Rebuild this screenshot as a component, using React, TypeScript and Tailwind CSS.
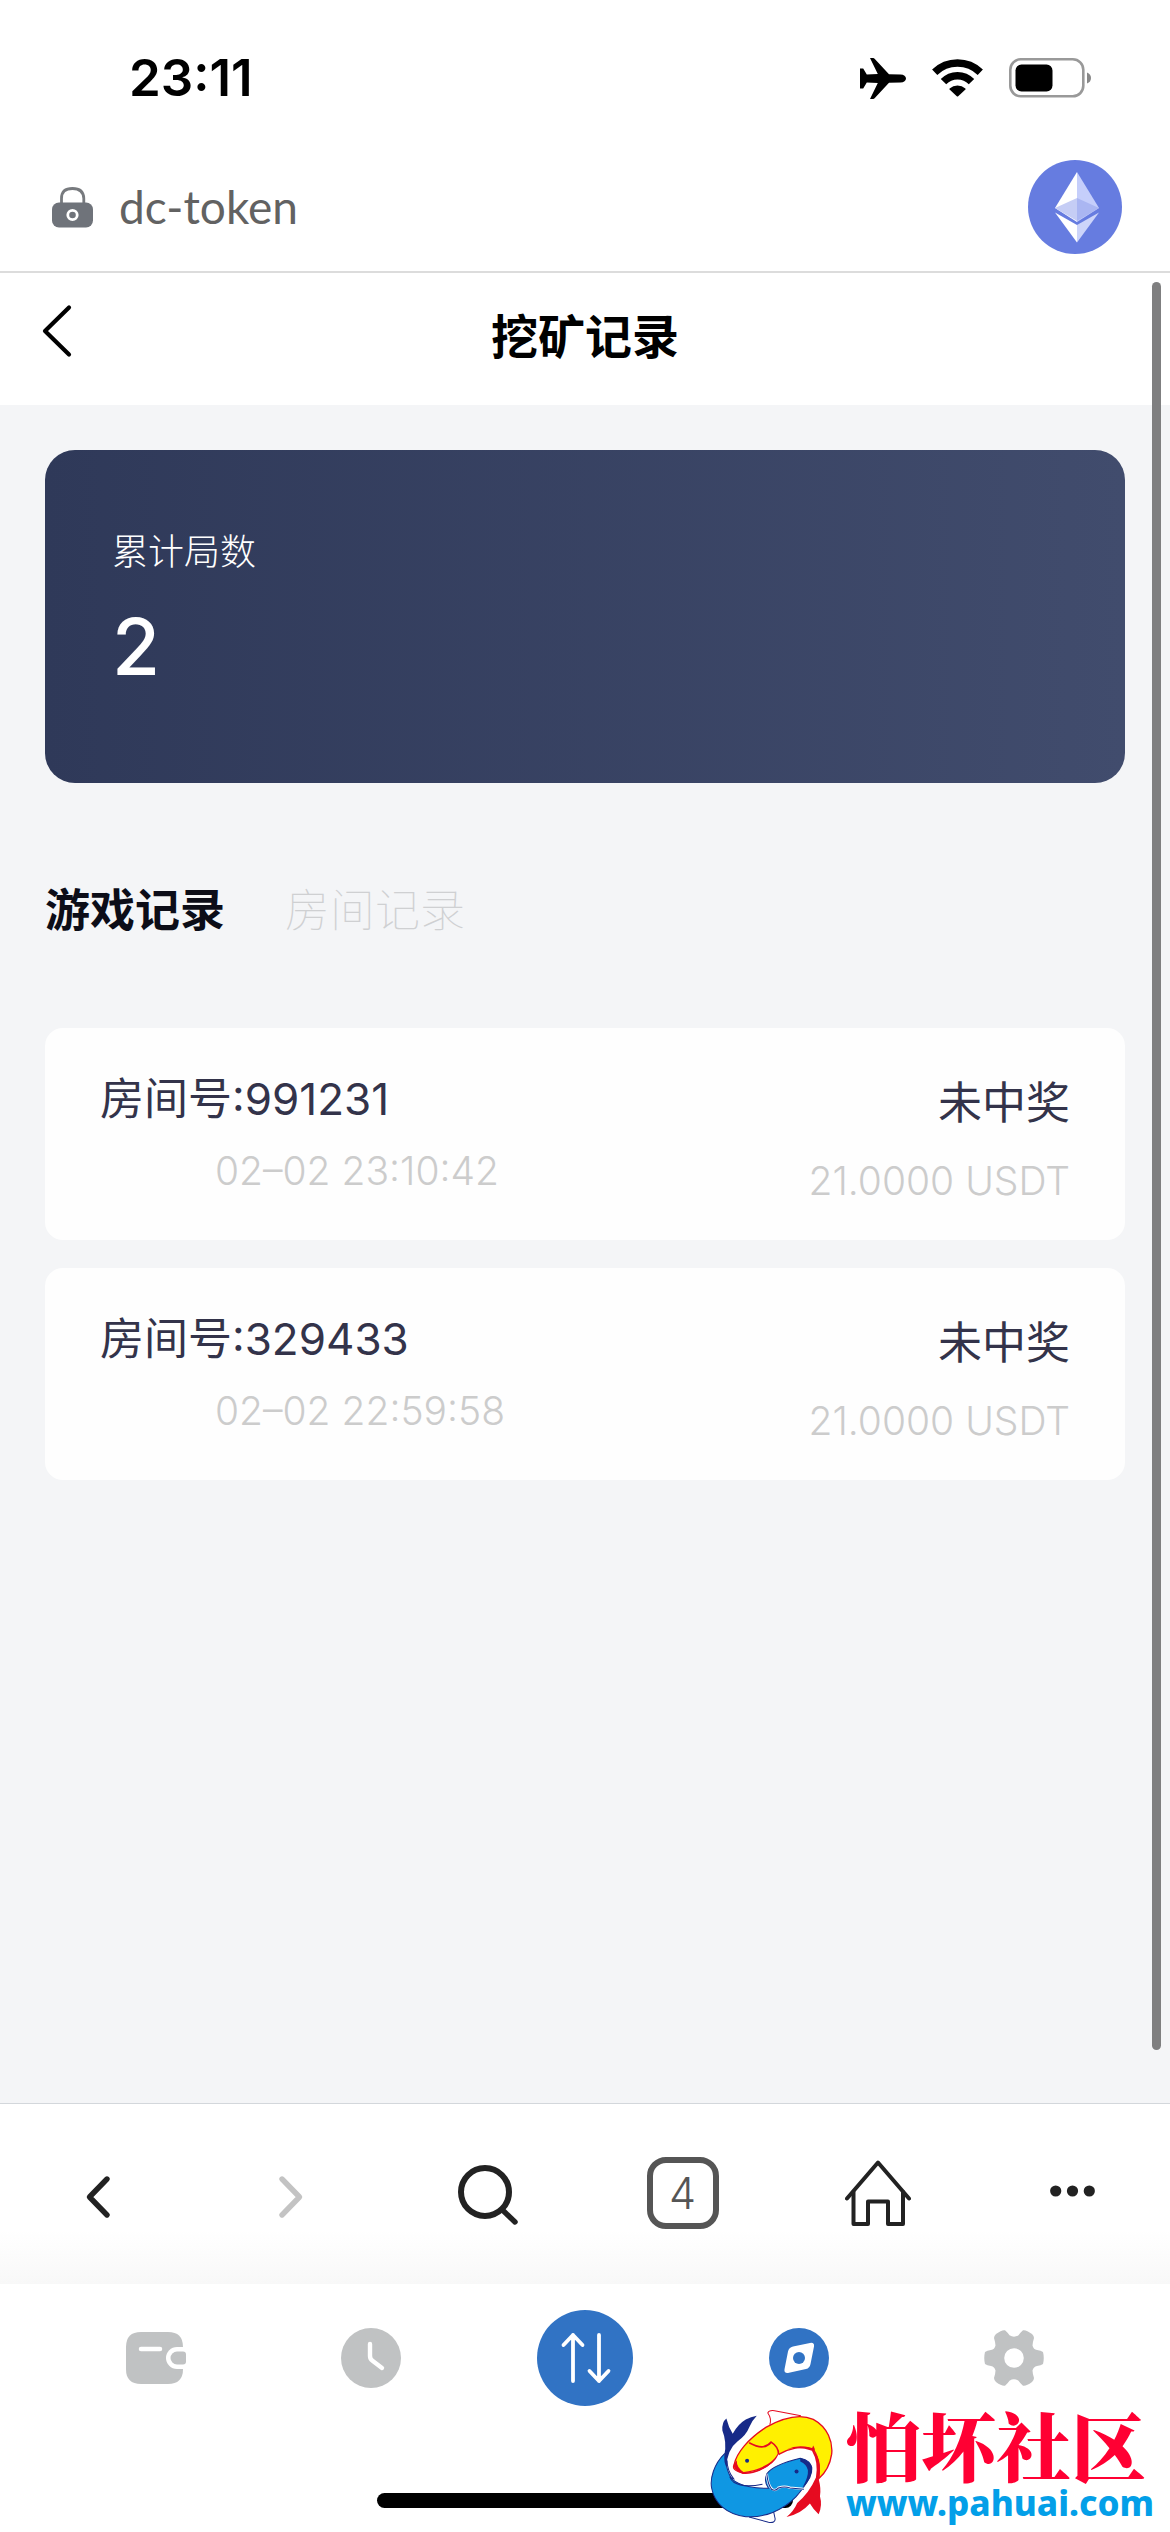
import type { ReactNode } from "react";

const records = [
  { room: "991231", time: "02–02 23:10:42", result: "未中奖", amount: "21.0000 USDT" },
  { room: "329433", time: "02–02 22:59:58", result: "未中奖", amount: "21.0000 USDT" },
];

const StatusBar = () => {
  return (
    <div className="flex items-center justify-between pt-12 pr-[79px] pl-[129px]">
      <span className="text-[51px] leading-[60px] font-semibold text-black">23:11</span>
      <div className="flex items-center gap-[26px]">
        <svg width="46" height="41" viewBox="0 0 46 41" aria-hidden="true">
          <path d="M0 10.500h3.200l3.600 6 11-.5L10 0h3.200q.8 0 1.400.8L29 16.300l11.500.2c3.400.1 5.500 1.800 5.500 4s-2.100 3.900-5.500 4L29 24.700 14.600 40.200q-.6.8-1.400.8H10l7.800-16-11-.5-3.600 6H0z" />
        </svg>
        <svg width="51" height="38" viewBox="0 0 51 38" fill="none" aria-hidden="true">
          <path d="M2.700 13.200A32.800 32.800 0 0 1 48.300 13.200" stroke="#000" strokeWidth="7.500" />
          <path d="M11.500 22.700A19.300 19.300 0 0 1 39.500 22.700" stroke="#000" strokeWidth="7.500" />
          <path d="M17.600 29.400a12 12 0 0 1 15.800 0q.5.500 0 1L26.200 37.300q-.7.6-1.400 0L17.600 30.400q-.5-.5 0-1z" fill="#000" />
        </svg>
        <svg width="82" height="40" viewBox="0 0 82 40" aria-hidden="true">
          <rect x="1.300" y="1.300" width="73" height="37" rx="10.500" fill="none" stroke="#999" strokeWidth="2.600" />
          <rect x="6.500" y="6.500" width="37" height="27" rx="6" />
          <path d="M78 14.500q4 1.500 4 5.500t-4 5.500z" fill="#888" />
        </svg>
      </div>
    </div>
  );
};

const AddressBar = () => {
  return (
    <div className="flex items-center border-b-2 border-[#dcdcdc] pt-[52px] pr-12 pb-[17px] pl-[52px]">
      <svg width="41" height="41" viewBox="0 0 41 41" fill="none" aria-hidden="true">
        <path d="M9.500 17v-5.500Q9.500 1.500 20.500 1.500t11.300 10V17" stroke="#777a7e" strokeWidth="2.800" />
        <rect y="15.500" width="41" height="25" rx="7" fill="#6f737a" />
        <circle cx="20.500" cy="28" r="4.700" stroke="#fff" strokeWidth="2.800" />
      </svg>
      <span className="ml-[26px] flex-1 font-['Lato'] text-[46px] leading-[54px] text-[#626262]">dc-token</span>
      <button aria-label="Ethereum">
        <svg width="94" height="94" viewBox="0 0 94 94">
          <circle cx="47" cy="47" r="47" fill="#667ce0" />
          <path d="M49 12v50L27 48z" fill="#fff" />
          <path d="M49 12v50l22-14z" fill="#c5cefb" />
          <path d="M49 38v23L27 48z" fill="#c5cdf5" />
          <path d="M49 38v23l22-13z" fill="#aab6f2" />
          <path d="M27 52.500 49 65v17.500z" fill="#fff" />
          <path d="M71 52.500 49 65v17.500z" fill="#ccd4fa" />
        </svg>
      </button>
    </div>
  );
};

const TitleBar = () => {
  return (
    <header className="grid grid-cols-[1fr_auto_1fr] items-center bg-white px-10 pt-7 pb-8">
      <button aria-label="返回" className="justify-self-start pb-3">
        <svg width="34" height="54" viewBox="0 0 34 54" fill="none">
          <path d="M29 3.500 5 27 29 50.500" stroke="#000" strokeWidth="4.200" strokeLinecap="round" strokeLinejoin="round" />
        </svg>
      </button>
      <h1 className="text-[47px] leading-[72px] font-semibold text-black">挖矿记录</h1>
    </header>
  );
};

const RecordCard = ({ room, time, result, amount }: (typeof records)[number]) => {
  return (
    <li className="flex justify-between rounded-[18px] bg-[#fefefe] px-[55px] pb-8">
      <div className="flex flex-col gap-[18px] pt-11">
        <p className="text-[44px] leading-[54px] text-[#33334a]">房间号:{room}</p>
        <p className="ml-[115px] text-[39px] leading-[54px] font-light text-[#ccc]">{time}</p>
      </div>
      <div className="flex flex-col gap-6 pt-12 text-right">
        <p className="text-[44px] leading-[54px] text-[#33334a]">{result}</p>
        <p className="text-[39px] leading-[54px] font-light text-[#ccc]">{amount}</p>
      </div>
    </li>
  );
};

const NavButton = ({ label, children }: { label: string; children: ReactNode }) => {
  return (
    <button aria-label={label} className="flex items-center justify-center">
      {children}
    </button>
  );
};

const BrowserBar = () => {
  return (
    <nav className="grid h-[181px] grid-cols-6 border-t border-[#d3d7db] bg-linear-to-b from-white from-70% to-[#f8f8f8] pb-[6px]">
      <NavButton label="后退">
        <svg width="30" height="46" viewBox="0 0 30 46" fill="none" className="mt-3">
          <path d="M24 5 6.500 23 24 41" stroke="#222" strokeWidth="5.400" strokeLinecap="round" strokeLinejoin="round" />
        </svg>
      </NavButton>
      <NavButton label="前进">
        <svg width="30" height="46" viewBox="0 0 30 46" fill="none" className="mt-3">
          <path d="M4 5 21.500 23 4 41" stroke="#c3c3c3" strokeWidth="5.400" strokeLinecap="round" strokeLinejoin="round" />
        </svg>
      </NavButton>
      <NavButton label="搜索">
        <svg width="60" height="60" viewBox="0 0 60 60" fill="none" className="mt-2">
          <circle cx="27" cy="27" r="24" stroke="#222" strokeWidth="6" />
          <path d="M44.500 45 57 57" stroke="#222" strokeWidth="5.400" strokeLinecap="round" />
        </svg>
      </NavButton>
      <NavButton label="标签页">
        <span className="mt-1 flex h-[72px] w-[72px] items-center justify-center rounded-[19px] border-6 border-[#555] text-[43px] leading-[60px] font-light text-[#555]">
          4
        </span>
      </NavButton>
      <NavButton label="主页">
        <svg width="66" height="66" viewBox="0 0 66 66" fill="none" stroke="#222" strokeWidth="4" strokeLinecap="round" strokeLinejoin="round" className="mt-1">
          <path d="M2 38.500 33 2.500 64 38.500" />
          <path d="M8.500 32v32H23V41.500h20V64h15V32" />
        </svg>
      </NavButton>
      <NavButton label="更多">
        <svg width="45" height="12" viewBox="0 0 45 12" fill="#222">
          <circle cx="5.700" cy="6" r="5.600" />
          <circle cx="22.500" cy="6" r="5.600" />
          <circle cx="39.300" cy="6" r="5.600" />
        </svg>
      </NavButton>
    </nav>
  );
};

const TabBar = () => {
  return (
    <nav className="grid grid-cols-5 bg-white px-[49px] pt-[26px]">
      <NavButton label="钱包">
        <svg width="60" height="52" viewBox="0 0 60 52">
          <path d="M15 0h27q15 0 15 15v22q0 15-15 15H15Q0 52 0 37V15Q0 0 15 0z" fill="#c0c2c3" />
          <path d="M15 17h19" stroke="#fff" strokeWidth="4.500" strokeLinecap="round" />
          <path d="M60 15H51a11 11 0 0 0 0 22h9z" fill="#fff" />
          <path d="M51 19.500h6q3 0 3 3v7q0 3-3 3h-6a6.500 6.500 0 0 1 0-13z" fill="#c0c2c3" />
        </svg>
      </NavButton>
      <NavButton label="记录">
        <svg width="60" height="60" viewBox="0 0 60 60" fill="none">
          <circle cx="30" cy="30" r="30" fill="#c0c2c3" />
          <path d="M29 16v12q0 3 2.500 4.800L41 40" stroke="#fff" strokeWidth="4.400" strokeLinecap="round" />
        </svg>
      </NavButton>
      <NavButton label="兑换">
        <svg width="96" height="96" viewBox="0 0 96 96" fill="none">
          <circle cx="48" cy="48" r="48" fill="#3173c4" />
          <path d="M36 71V25M26.500 35 36 25l9.500 10M62 25v46M52.500 61 62 71l9.500-10" stroke="#fff" strokeWidth="3.800" strokeLinecap="round" strokeLinejoin="round" />
        </svg>
      </NavButton>
      <NavButton label="发现">
        <svg width="60" height="60" viewBox="0 0 60 60">
          <circle cx="30" cy="30" r="30" fill="#3173c4" />
          <path d="M24 18.500 41 15q4.600-.8 4 3.500L41.500 36q-.8 4.200-4.500 5l-17 3.800q-5.200 1-4.500-3.600L19 23.500q.8-4 5-5z" fill="#fff" />
          <circle cx="30" cy="30" r="6" fill="#3173c4" />
        </svg>
      </NavButton>
      <NavButton label="设置">
        <svg width="60" height="56" viewBox="0 0 60 56">
          <path
            fillRule="evenodd"
            fill="#c0c2c3"
            d="M12 4Q18-.5 21 .3 24 3 25.500 5.300 30 8 34.500 5.300 36 3 39 .3 42-.5 48 4q2 2 2 4-1.500 5-1.500 7.500 1 4 4.500 4.500 4 .3 6 2 1.500 6 0 12-2 1.700-6 2-3.500.5-4.500 4.500 0 2.500 1.500 7.500 0 2-2 4-6 4.500-9 3.700-3-2.700-4.500-5-4.500-2.700-9 0-1.500 2.300-4.500 5-3 .8-9-3.700-2-2-2-4 1.500-5 1.500-7.500-1-4-4.500-4.500-4-.3-6-2-1.500-6 0-12 2-1.700 6-2 3.500-.5 4.500-4.500 0-2.500-1.500-7.500 0-2 2-4zM30 18.200a9.800 9.800 0 1 0 0 19.600a9.800 9.800 0 1 0 0-19.600z"
          />
        </svg>
      </NavButton>
    </nav>
  );
};

const Watermark = () => {
  return (
    <div className="absolute right-[16px] bottom-[7px] flex items-center">
      <svg width="127" height="117" viewBox="30 25 380 350" aria-hidden="true">
        {/* white band between the two fish */}
        <path d="M75 165 105 145 240 110 350 140 362 175 355 240 320 285 250 300 92 260z" fill="#fff" />
        {/* fins */}
        <path d="M212 78Q218 60 206 43 209 34 226 36L305 51" fill="#fff" stroke="#e60b20" strokeWidth="3" />
        <path d="M150 354 208 370Q228 373 228 360L222 332" fill="#fff" stroke="#172a88" strokeWidth="3" />
        {/* blue fish */}
        <path
          d="M76 165C45 195 32 240 38 268 46 312 82 346 140 353 195 357 250 335 290 294 318 262 335 235 337 212 338 195 325 182 303 178 262 188 215 205 203 225 196 242 200 258 208 268 170 270 122 262 98 240 82 215 78 190 84 165z"
          fill="#0f97e3"
          stroke="#172a88"
          strokeWidth="3"
        />
        <path d="M84 185Q84 215 104 240 96 238 92 234 96 244 104 250 134 268 190 256" fill="none" stroke="#172a88" strokeWidth="3" />
        <path d="M76 168Q84 130 70 95 68 70 82 59 88 84 101 105 116 76 140 62 155 54 173 51 158 66 150 86 142 108 115 128 84 152 82 205 74 190 76 168z" fill="#172a88" />
        <path d="M203 225Q206 258 218 270 230 278 238 266 256 260 272 266L314 270" fill="none" stroke="#fff" strokeWidth="7" />
        <path d="M203 225Q206 258 218 272 230 278 238 267 256 262 272 267L314 271" fill="none" stroke="#172a88" strokeWidth="3" />
        <path d="M303 178Q334 186 339 205 342 236 310 266 328 232 326 214 322 196 303 188z" fill="#172a88" />
        {/* yellow fish */}
        <path
          d="M105 198C112 162 148 120 200 86 250 58 300 44 342 62 386 86 401 130 397 166 392 200 374 226 358 240 365 200 352 162 340 150 308 140 268 150 240 166 222 194 190 214 130 222 106 216 100 208 105 198z"
          fill="#fff000"
          stroke="#e60b20"
          strokeWidth="4"
        />
        <path d="M150 132Q176 146 192 144 206 142 216 130 238 144 238 166 222 196 180 214 150 226 128 222" fill="none" stroke="#e60b20" strokeWidth="5" />
        <path d="M238 166Q226 196 182 217 150 230 132 226 156 236 184 226 220 212 246 180z" fill="#fff" />
        <path d="M105 196Q102 212 122 220L136 222Q112 206 113 184z" fill="#e60b20" />
        <path d="M262 152Q300 134 338 149L342 140Q348 148 346 160 364 180 362 214 360 236 358 240 366 270 362 292 370 320 358 346 342 332 332 314 304 346 262 354 284 336 294 312 330 282 350 236 358 190 338 156 302 142 262 152z" fill="#e60b20" />
        <circle cx="144" cy="186" r="6" fill="#172a88" />
        <circle cx="292" cy="218" r="6" fill="#172a88" />
      </svg>
      <div className="ml-[10px]">
        <p className="font-['Noto_Serif_CJK_SC','Noto_Sans_CJK_SC',serif] text-[75px] leading-[75px] font-black text-[#ff0033]">怕坏社区</p>
        <a href="http://www.pahuai.com" className="block font-['Noto_Sans'] text-[35px] leading-[44px] font-extrabold text-[#039fe8]">
          www.pahuai.com
        </a>
      </div>
    </div>
  );
};

export default function App() {
  return (
    <div className="relative flex min-h-screen flex-col bg-white font-['Inter','Noto_Sans_CJK_SC',sans-serif]">
      <StatusBar />
      <AddressBar />
      <div className="relative flex flex-1 flex-col bg-[#f4f5f7]">
        <TitleBar />
        <main className="px-[45px] pt-[45px]">
          <section className="rounded-[30px] bg-linear-to-r from-[#2f3959] to-[#414c6d] px-[67px] pt-[75px] pb-[100px] text-white">
            <p className="text-[36px] leading-[54px] font-light">累计局数</p>
            <p className="mt-8 text-[78px] leading-[72px] font-medium">2</p>
          </section>
          <div role="tablist" className="mt-24 flex gap-[60px] text-[45px] leading-[64px]">
            <button role="tab" aria-selected="true" className="font-semibold text-[#0c0d18]">游戏记录</button>
            <button role="tab" aria-selected="false" className="font-thin text-[#cfd0d2]">房间记录</button>
          </div>
          <ul className="mt-[85px] flex flex-col gap-7">
            {records.map((record) => (
              <RecordCard key={record.room} {...record} />
            ))}
          </ul>
        </main>
        {/* scroll thumb */}
        <div className="absolute top-[9px] right-[9px] bottom-[53px] w-[9px] rounded-full bg-[#7f7f80]" />
      </div>
      <BrowserBar />
      <TabBar />
      <div className="flex justify-center bg-white pt-[87px] pb-6">
        <div className="h-[15px] w-[416px] rounded-full bg-black" />
      </div>
      <Watermark />
    </div>
  );
}
